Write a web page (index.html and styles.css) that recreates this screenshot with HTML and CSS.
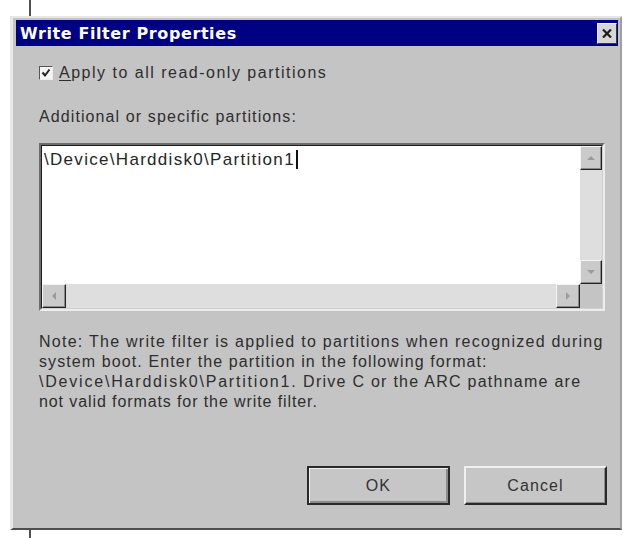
FILE: index.html
```html
<!DOCTYPE html>
<html lang="en">
<head>
<meta charset="utf-8">
<title>Write Filter Properties</title>
<link rel="stylesheet" href="styles.css">
</head>
<body>
<div class="rule rule-top"></div>
<div class="dialog">
  <div class="titlebar">
    <span class="title">Write Filter Properties</span>
    <span class="close" aria-label="Close">
      <svg width="10" height="9" viewBox="0 0 10 9"><path d="M1 0.5 L9 8.5 M9 0.5 L1 8.5" stroke="#1e1e1e" stroke-width="2.2" fill="none"/></svg>
    </span>
  </div>
  <div class="content">
    <label class="check-row">
      <span class="checkbox">
        <svg width="10" height="10" viewBox="0 0 10 10"><path d="M1.5 4.5 L4 7.5 L8.5 1.5" stroke="#222" stroke-width="2" fill="none"/></svg>
      </span>
      <span class="check-label"><u>A</u>pply to all read-only partitions</span>
    </label>
    <div class="field-label">Additional or specific partitions:</div>
    <div class="editbox">
      <div class="editbox-inner">
        <div class="edit-text">\Device\Harddisk0\Partition1<span class="caret"></span></div>
        <div class="vscroll">
          <div class="sb-btn"><span class="arrow arrow-up"></span></div>
          <div class="track"></div>
          <div class="sb-btn"><span class="arrow arrow-down"></span></div>
        </div>
        <div class="hscroll">
          <div class="sb-btn"><span class="arrow arrow-left"></span></div>
          <div class="track"></div>
          <div class="sb-btn"><span class="arrow arrow-right"></span></div>
        </div>
        <div class="corner"></div>
      </div>
    </div>
    <p class="note"><span class="note-wide">Note: The write filter is applied to partitions when recognized during</span><br>system boot. Enter the partition in the following format:<br><span class="note-path">\Device\Harddisk0\Partition1.</span> <span class="note-wide">Drive C or the ARC pathname are</span><br><span class="note-tight">not valid formats for the write filter.</span></p>
    <div class="buttons">
      <button class="btn btn-default">OK</button>
      <button class="btn">Cancel</button>
    </div>
  </div>
</div>
<div class="rule rule-bottom"></div>
</body>
</html>
```

FILE: styles.css
```css
* {
  box-sizing: border-box;
}

html,
body {
  margin: 0;
  background: #ffffff;
}

body {
  width: 623px;
  height: 538px;
  overflow: hidden;
  font-family: "Liberation Sans", Arial, sans-serif;
  font-size: 16px;
  letter-spacing: 1.1px;
  color: #2e2e2e;
}

/* thin rules running above and below the window */
.rule {
  width: 2px;
  margin-left: 29px;
  background: #505050;
}

.rule-top {
  height: 16px;
}

.rule-bottom {
  height: 8px;
}

/* window frame */
.dialog {
  margin-left: 10px;
  width: 612px;
  height: 514px;
  background: #c4c4c4;
  border-top: 2px solid #e6e6e6;
  border-left: 3px solid #e8e8e8;
  border-right: 2px solid #a0a0a0;
  border-bottom: 2px solid #4e4e4e;
  padding: 2px 2px 0 3px;
  display: flex;
  flex-direction: column;
}

.titlebar {
  height: 26px;
  background: #000082;
  display: flex;
  align-items: center;
  padding: 0 1px 0 4px;
  flex: none;
}

.title {
  font-family: "DejaVu Sans", "Liberation Sans", sans-serif;
  font-weight: bold;
  font-size: 16px;
  letter-spacing: 0.6px;
  color: #ffffff;
}

.close {
  margin-left: auto;
  width: 20px;
  height: 21px;
  background: #d6d6d6;
  border: 1px solid;
  border-color: #f2f2f2 #3a3a3a #3a3a3a #f2f2f2;
  display: flex;
  align-items: center;
  justify-content: center;
}

/* body of the window */
.content {
  flex: 1;
  padding: 18px 13px 0 23px;
  display: flex;
  flex-direction: column;
}

.check-row {
  height: 18px;
  display: flex;
  align-items: center;
  gap: 6px;
}

.checkbox {
  width: 14px;
  height: 14px;
  background: #f4f4f4;
  border: 1px solid;
  border-color: #555 #eee #eee #555;
  display: flex;
  align-items: center;
  justify-content: center;
}

.check-label {
  letter-spacing: 1.5px;
}

.check-label u {
  text-decoration-thickness: 1px;
  text-underline-offset: 2px;
}

.field-label {
  margin-top: 25px;
  line-height: 20px;
}

/* multi-line edit box with both scroll bars */
.editbox {
  margin-top: 16px;
  height: 168px;
  border: 2px solid;
  border-color: #6c6c6c #ececec #ececec #6c6c6c;
}

.editbox-inner {
  height: 100%;
  border: 1px solid;
  border-color: #1e1e1e #d0d0d0 #d0d0d0 #1e1e1e;
  background: #ffffff;
  display: grid;
  grid-template-columns: 1fr 22px;
  grid-template-rows: 1fr 24px;
}

.edit-text {
  padding: 4px 0 0 2px;
  font-size: 17px;
  letter-spacing: 1.3px;
  line-height: 20px;
  color: #262626;
}

.caret {
  display: inline-block;
  width: 2px;
  height: 19px;
  background: #111;
  vertical-align: -4px;
  margin-left: 1px;
}

.vscroll,
.hscroll {
  display: flex;
  background: #dedede;
}

.vscroll {
  flex-direction: column;
}

.track {
  flex: 1;
}

.sb-btn {
  width: 22px;
  height: 24px;
  flex: none;
  background: #cacaca;
  border: 1px solid;
  border-color: #f4f4f4 #222 #222 #f4f4f4;
  box-shadow: inset -1px -1px 0 #8a8a8a;
  display: flex;
  align-items: center;
  justify-content: center;
}

.hscroll .sb-btn {
  width: 24px;
  height: 24px;
}

.arrow {
  width: 0;
  height: 0;
  border: 4px solid transparent;
}

.arrow-up {
  border-bottom-color: #9a9a9a;
  margin-top: -4px;
}

.arrow-down {
  border-top-color: #9a9a9a;
  margin-bottom: -4px;
}

.arrow-left {
  border-right-color: #9a9a9a;
  margin-left: -4px;
}

.arrow-right {
  border-left-color: #9a9a9a;
  margin-right: -4px;
}

.corner {
  background: #c4c4c4;
}

.note {
  margin: 21px 0 0 0;
  line-height: 20px;
  white-space: nowrap;
}

.note-wide {
  letter-spacing: 1.26px;
}

.note-path {
  letter-spacing: 1.8px;
}

.note-tight {
  letter-spacing: 0.9px;
}

.buttons {
  margin-top: 54px;
  margin-right: -2px;
  display: flex;
  justify-content: flex-end;
  gap: 14px;
}

.btn {
  width: 143px;
  height: 39px;
  padding: 0;
  font-family: "Liberation Sans", Arial, sans-serif;
  font-size: 16px;
  letter-spacing: 1.1px;
  color: #333;
  background: #c6c6c6;
  border: 2px solid;
  border-color: #f0f0f0 #2a2a2a #2a2a2a #f0f0f0;
  box-shadow: inset -1px -1px 0 #8c8c8c;
}

.btn-default {
  border-color: #2a2a2a;
  box-shadow: inset 1px 1px 0 #f0f0f0, inset -2px -2px 0 #8c8c8c;
}
```
